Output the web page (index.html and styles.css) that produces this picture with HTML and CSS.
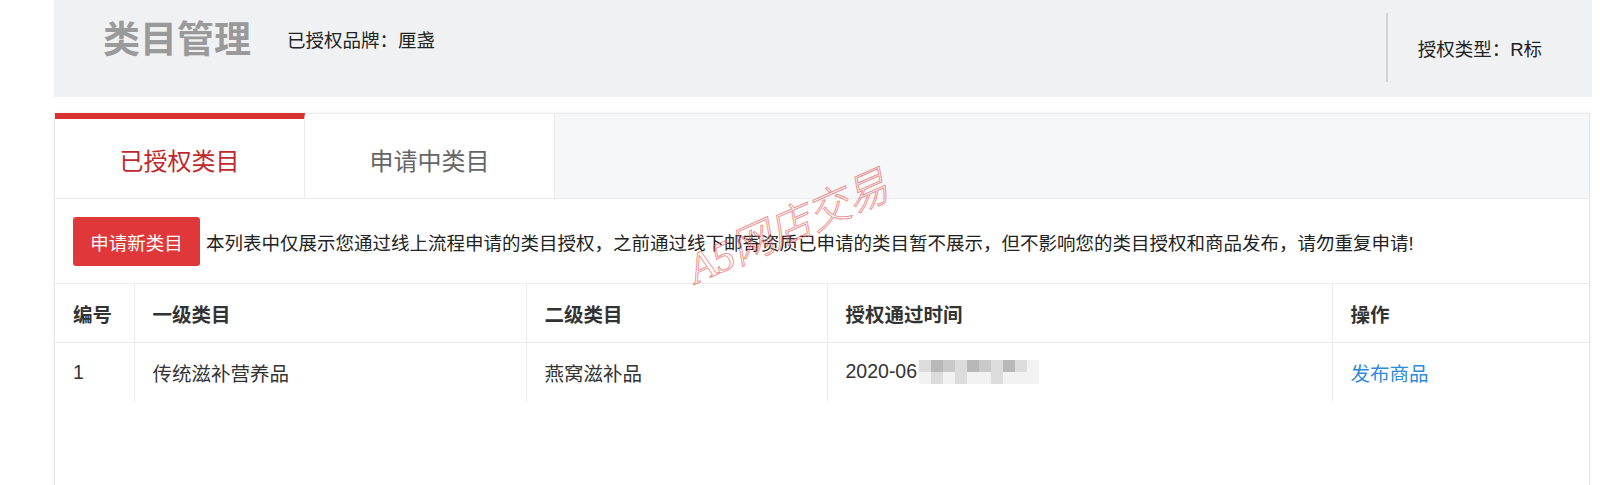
FILE: index.html
```html
<!DOCTYPE html>
<html lang="zh-CN">
<head>
    <meta charset="UTF-8">
    <meta name="viewport" content="width=device-width, initial-scale=1.0">
    <title>类目管理</title>
    <link rel="stylesheet" href="styles.css">
</head>
<body>
    <div class="page-head">
        <div class="head-left">
            <h1 class="head-title">类目管理</h1>
            <span class="head-brand">已授权品牌：厘盏</span>
        </div>
        <div class="head-right">授权类型：R标</div>
    </div>

    <div class="card">
        <div class="tabs">
            <div class="tab active">已授权类目</div>
            <div class="tab">申请中类目</div>
            <div class="tab-fill"></div>
        </div>

        <div class="toolbar">
            <button class="btn-apply">申请新类目</button>
            <span class="notice">本列表中仅展示您通过线上流程申请的类目授权，之前通过线下邮寄资质已申请的类目暂不展示，但不影响您的类目授权和商品发布，请勿重复申请!</span>
        </div>

        <table class="cat-table">
            <colgroup>
                <col class="c-no">
                <col class="c-first">
                <col class="c-second">
                <col class="c-time">
                <col>
            </colgroup>
            <thead>
                <tr>
                    <th>编号</th>
                    <th>一级类目</th>
                    <th>二级类目</th>
                    <th>授权通过时间</th>
                    <th>操作</th>
                </tr>
            </thead>
            <tbody>
                <tr>
                    <td>1</td>
                    <td>传统滋补营养品</td>
                    <td>燕窝滋补品</td>
                    <td>2020-06<span class="mosaic"><i class="m2"></i><i class="m3"></i><i class="m4"></i><i class="m2"></i><i class="m3"></i><i class="m4"></i><i class="m2"></i><i class="m3"></i><i class="m2"></i><i class="m1"></i><i class="m1"></i><i class="m2"></i><i class="m1"></i><i class="m2"></i><i class="m1"></i><i class="m1"></i><i class="m2"></i><i class="m1"></i><i class="m1"></i><i class="m1"></i></span></td>
                    <td><a class="link" href="#">发布商品</a></td>
                </tr>
            </tbody>
        </table>

        <span class="watermark">A5网店交易</span>
    </div>
</body>
</html>
```

FILE: styles.css
```css
body, html {
    margin: 0;
    padding: 0;
    width: 100%;
    height: 100%;
    overflow: hidden;
    background: #fff;
}
body {
    font-family: "Liberation Sans", "Noto Sans CJK SC", sans-serif;
    color: #222;
}

/* page head */
.page-head {
    margin-left: 54px;
    width: 1538px;
    height: 97px;
    background: #f0f1f3;
    display: flex;
    align-items: flex-start;
}
.head-left {
    display: flex;
    align-items: center;
    padding: 22px 0 0 49px;
}
.head-title {
    margin: 0;
    font-size: 37px;
    line-height: 37px;
    font-weight: bold;
    color: #9a9a9a;
}
.head-brand {
    margin: 0 0 4px 36px;
    font-size: 18.5px;
    color: #222;
}
.head-right {
    margin: 13px 0 0 auto;
    height: 69px;
    border-left: 2px solid #d2d3d5;
    padding: 0 50px 0 30px;
    display: flex;
    align-items: center;
    font-size: 18.5px;
    color: #222;
}

/* card */
.card {
    position: relative;
    margin: 16px 0 0 54px;
    width: 1536px;
    min-height: 380px;
    box-sizing: border-box;
    border: 1px solid #e4e5e7;
    border-top: none;
    box-shadow: 0 0 3px rgba(0, 0, 0, 0.08);
}
.tabs {
    display: flex;
    height: 86px;
    border-bottom: 1px solid #ebebeb;
    box-sizing: border-box;
}
.tab {
    width: 250px;
    box-sizing: border-box;
    border-top: 1px solid #ebebeb;
    border-right: 1px solid #ebebeb;
    padding-top: 6px;
    display: flex;
    align-items: center;
    justify-content: center;
    font-size: 24px;
    color: #666;
    background: #fff;
}
.tab.active {
    border-top: 6px solid #d8302f;
    padding-top: 2px;
    color: #c0282c;
}
.tab-fill {
    flex: 1;
    border-top: 1px solid #ebebeb;
    background: #f6f7f9;
}

.toolbar {
    display: flex;
    align-items: center;
    padding: 18px 18px 17px;
}
.btn-apply {
    width: 127px;
    height: 49px;
    border: none;
    border-radius: 3px;
    background: #e0383a;
    color: #fff;
    font-family: inherit;
    font-size: 18.5px;
    padding: 0;
}
.notice {
    margin-left: 6px;
    font-size: 18.5px;
    color: #222;
}

/* table */
.cat-table {
    width: 100%;
    border-collapse: collapse;
    table-layout: fixed;
}
.c-no { width: 79px; }
.c-first { width: 392px; }
.c-second { width: 301px; }
.c-time { width: 505px; }
.cat-table th,
.cat-table td {
    height: 58px;
    padding: 0 18px;
    text-align: left;
    font-size: 19.5px;
    color: #333;
    border-left: 1px solid #ececec;
}
.cat-table th:first-child,
.cat-table td:first-child {
    border-left: none;
}
.cat-table th {
    font-weight: bold;
    border-top: 1px solid #ececec;
    border-bottom: 1px solid #ececec;
}
.link {
    color: #2f8ad8;
    text-decoration: none;
}
.mosaic {
    display: inline-grid;
    grid-template-columns: repeat(10, 12px);
    grid-template-rows: 12px 12px;
    vertical-align: middle;
    margin-left: 2px;
}
.mosaic i { display: block; }
.m1 { background: #f2f2f2; }
.m2 { background: #dcdcdc; }
.m3 { background: #b8b8b8; }
.m4 { background: #c9c9c9; }

.watermark {
    position: absolute;
    left: 624px;
    top: 80px;
    font-family: "Liberation Serif", "Noto Sans CJK SC", serif;
    font-style: italic;
    font-size: 42px;
    font-weight: 300;
    color: transparent;
    -webkit-text-stroke: 1px rgba(232, 100, 98, 0.7);
    transform: rotate(-24deg);
    white-space: nowrap;
    pointer-events: none;
}
```
